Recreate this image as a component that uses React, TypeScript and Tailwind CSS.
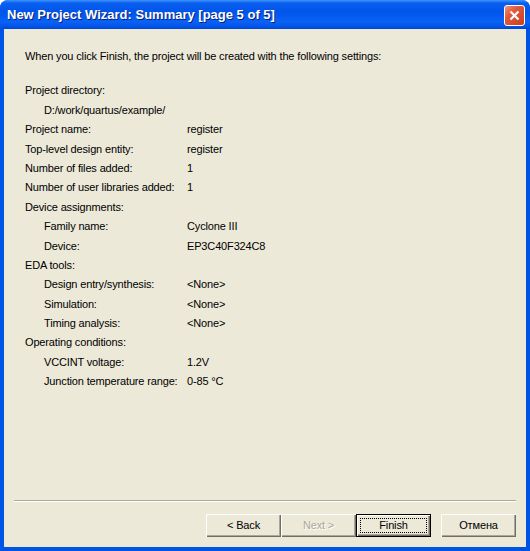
import React from "react";

type Row = { label: string; value?: string; indent?: boolean };

const rows: Row[] = [
  { label: "Project directory:" },
  { label: "D:/work/quartus/example/", indent: true },
  { label: "Project name:", value: "register" },
  { label: "Top-level design entity:", value: "register" },
  { label: "Number of files added:", value: "1" },
  { label: "Number of user libraries added:", value: "1" },
  { label: "Device assignments:" },
  { label: "Family name:", value: "Cyclone III", indent: true },
  { label: "Device:", value: "EP3C40F324C8", indent: true },
  { label: "EDA tools:" },
  { label: "Design entry/synthesis:", value: "<None>", indent: true },
  { label: "Simulation:", value: "<None>", indent: true },
  { label: "Timing analysis:", value: "<None>", indent: true },
  { label: "Operating conditions:" },
  { label: "VCCINT voltage:", value: "1.2V", indent: true },
  { label: "Junction temperature range:", value: "0-85 °C", indent: true },
];

function XpButton({ label, disabled, focused }: { label: string; disabled?: boolean; focused?: boolean }) {
  return (
    <div
      className={`relative w-[75px] h-[23px] flex items-center justify-center bg-[#ECE9D8] ${
        focused
          ? "border border-black shadow-[inset_1px_1px_#fff,inset_-1px_-1px_#716F64,inset_-2px_-2px_#ACA899]"
          : "shadow-[inset_1px_1px_#fff,inset_-1px_-1px_#716F64,inset_-2px_-2px_#ACA899]"
      }`}
    >
      {focused && <div className="absolute inset-[3px] border border-dotted border-black" />}
      <span className={disabled ? "text-[#ACA899] [text-shadow:1px_1px_#fff]" : "text-black"}>{label}</span>
    </div>
  );
}

export default function App() {
  return (
    <div className="w-[530px] h-[551px] bg-white overflow-hidden font-['Liberation_Sans',Arial,sans-serif] text-[11px] tracking-[-0.15px] text-black">
      <div className="flex flex-col h-full rounded-t-[8px] bg-[#0054E3] overflow-hidden">
        {/* Title bar */}
        <div className="relative h-[29px] shrink-0 flex items-center pl-[7px] bg-[linear-gradient(to_bottom,#3D95FF_0px,#0A5FEF_3px,#0055EA_12px,#0A62F5_22px,#0052E6_27px,#0045D0_29px)]">
          <span className="font-bold text-[13px] text-white tracking-normal [text-shadow:1px_1px_#0A1E7A] whitespace-nowrap">
            New Project Wizard: Summary [page 5 of 5]
          </span>
          <div className="absolute left-[504px] top-[5px] w-[21px] h-[21px] rounded-[3px] border border-white bg-[linear-gradient(135deg,#F0957A_0%,#E2583E_35%,#C8401F_100%)] flex items-center justify-center">
            <svg width="11" height="11" viewBox="0 0 11 11">
              <path d="M1.5 1.5L9.5 9.5M9.5 1.5L1.5 9.5" stroke="white" strokeWidth="2.2" />
            </svg>
          </div>
        </div>

        {/* Body */}
        <div className="flex-1 mx-[4px] mb-[4px] bg-[#ECE9D8] flex flex-col">
          <div className="pl-[21px] pt-[18px]">
            <div className="leading-[19.4px]">
              When you click Finish, the project will be created with the following settings:
            </div>
            <div className="mt-[15px]">
              {rows.map((r, i) => (
                <div key={i} className="flex leading-[19.4px] h-[19.4px] whitespace-nowrap">
                  <span className={r.indent ? "pl-[19px] w-[162px] shrink-0" : "w-[162px] shrink-0"}>{r.label}</span>
                  {r.value && <span>{r.value}</span>}
                </div>
              ))}
            </div>
          </div>

          <div className="flex-1" />

          <div className="mx-[10px] border-t border-t-[#ACA899] border-b border-b-white" />

          <div className="flex justify-end pr-[10px] pt-[12px] pb-[10px]">
            <XpButton label="< Back" />
            <XpButton label="Next >" disabled />
            <XpButton label="Finish" focused />
            <div className="w-[10px]" />
            <XpButton label="Отмена" />
          </div>
        </div>
      </div>
    </div>
  );
}
